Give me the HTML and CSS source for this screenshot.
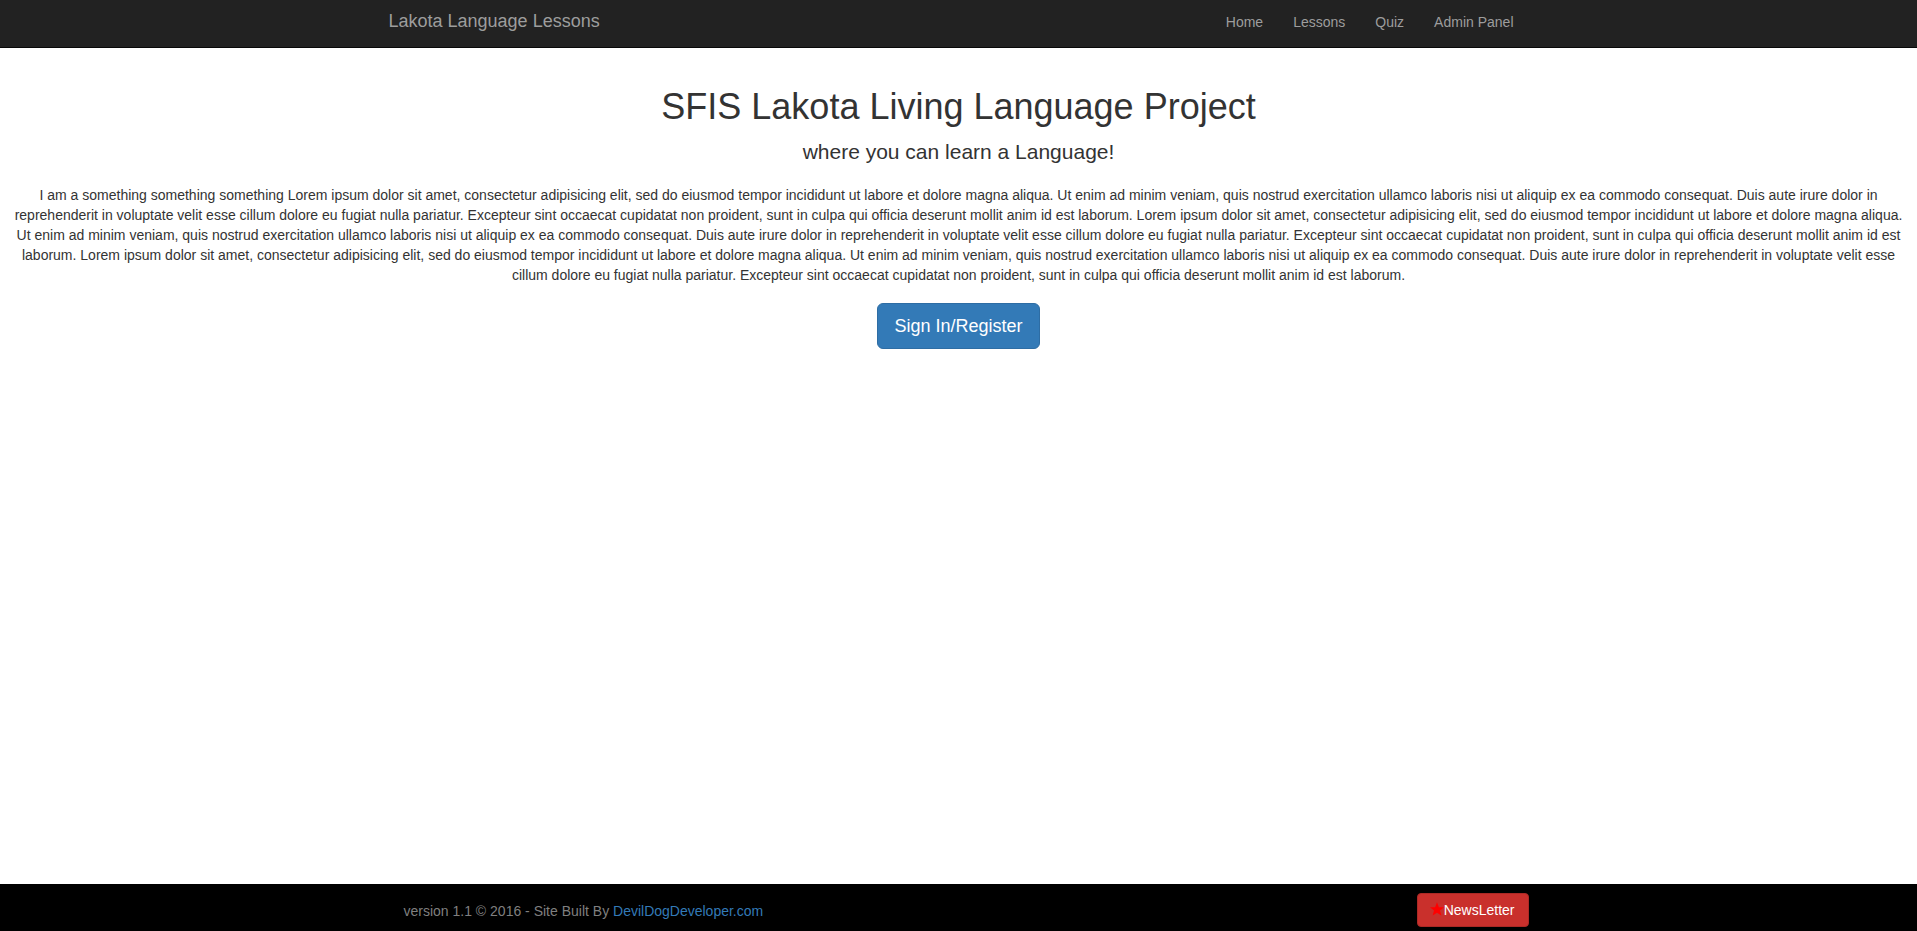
FILE: index.html
```html
<!DOCTYPE html>
<html lang="en">
<head>
<meta charset="utf-8">
<title>Lakota Language Lessons</title>
<link rel="stylesheet" href="styles.css">
</head>
<body>
<div class="page">
  <nav class="navbar">
    <div class="container nav-inner">
      <a class="brand" href="#">Lakota Language Lessons</a>
      <ul class="nav-links">
        <li><a href="#">Home</a></li>
        <li><a href="#">Lessons</a></li>
        <li><a href="#">Quiz</a></li>
        <li><a href="#">Admin Panel</a></li>
      </ul>
    </div>
  </nav>

  <main class="main">
    <h1 class="title">SFIS Lakota Living Language Project</h1>
    <p class="lead">where you can learn a Language!</p>
    <p class="intro">I am a something something something Lorem ipsum dolor sit amet, consectetur adipisicing elit, sed do eiusmod tempor incididunt ut labore et dolore magna aliqua. Ut enim ad minim veniam, quis nostrud exercitation ullamco laboris nisi ut aliquip ex ea commodo consequat. Duis aute irure dolor in reprehenderit in voluptate velit esse cillum dolore eu fugiat nulla pariatur. Excepteur sint occaecat cupidatat non proident, sunt in culpa qui officia deserunt mollit anim id est laborum. Lorem ipsum dolor sit amet, consectetur adipisicing elit, sed do eiusmod tempor incididunt ut labore et dolore magna aliqua. Ut enim ad minim veniam, quis nostrud exercitation ullamco laboris nisi ut aliquip ex ea commodo consequat. Duis aute irure dolor in reprehenderit in voluptate velit esse cillum dolore eu fugiat nulla pariatur. Excepteur sint occaecat cupidatat non proident, sunt in culpa qui officia deserunt mollit anim id est laborum. Lorem ipsum dolor sit amet, consectetur adipisicing elit, sed do eiusmod tempor incididunt ut labore et dolore magna aliqua. Ut enim ad minim veniam, quis nostrud exercitation ullamco laboris nisi ut aliquip ex ea commodo consequat. Duis aute irure dolor in reprehenderit in voluptate velit esse cillum dolore eu fugiat nulla pariatur. Excepteur sint occaecat cupidatat non proident, sunt in culpa qui officia deserunt mollit anim id est laborum.</p>
    <div class="actions">
      <a class="btn btn-primary btn-lg" href="#">Sign In/Register</a>
    </div>
  </main>

  <footer class="footer">
    <div class="container footer-inner">
      <p class="footer-text">version 1.1 &copy; 2016 - Site Built By <a href="#">DevilDogDeveloper.com</a></p>
      <a class="btn btn-danger" href="#"><svg class="star" viewBox="0 0 24 24" width="14" height="14" aria-hidden="true"><path d="M12 0.5l3.2 8.3 8.8 0.3-6.9 5.5 2.4 8.6L12 18.3 4.5 23.2l2.4-8.6L0 9.1l8.8-0.3z" fill="#ff0000"/></svg>NewsLetter</a>
    </div>
  </footer>
</div>
</body>
</html>
```

FILE: styles.css
```css
* {
  box-sizing: border-box;
}

html, body {
  margin: 0;
  padding: 0;
}

body {
  font-family: "Liberation Sans", Arial, Helvetica, sans-serif;
  font-size: 14px;
  line-height: 1.42857143;
  color: #333333;
  background: #ffffff;
}

a {
  text-decoration: none;
}

.page {
  min-height: 100vh;
  display: flex;
  flex-direction: column;
}

.container {
  width: 1170px;
  margin: 0 auto;
  padding: 0 15px;
}

/* Navbar */
.navbar {
  background: #222222;
  border-bottom: 1px solid #080808;
  height: 48px;
}

.nav-inner {
  display: flex;
  justify-content: space-between;
  align-items: flex-start;
  height: 47px;
}

.brand {
  display: block;
  margin-left: -15px;
  padding: 11px 15px 0;
  font-size: 18px;
  line-height: 20px;
  color: #9d9d9d;
}

.nav-links {
  display: flex;
  list-style: none;
  margin: 0;
  padding: 0;
}

.nav-links a {
  display: block;
  padding: 12px 15px 0;
  font-size: 14px;
  line-height: 20px;
  color: #9d9d9d;
}

/* Main */
.main {
  flex: 1;
  text-align: center;
}

.title {
  margin: 39px 0 10px;
  font-size: 36px;
  font-weight: 500;
  line-height: 1.1;
  color: #333333;
}

.lead {
  margin: 0 0 19px;
  font-size: 21px;
  font-weight: 300;
  line-height: 1.4;
}

.intro {
  margin: 0;
  padding: 0 7px;
}

.actions {
  margin-top: 18px;
}

/* Buttons */
.btn {
  display: inline-block;
  border: 1px solid transparent;
  white-space: nowrap;
  vertical-align: middle;
  text-align: center;
  padding: 6px 12px;
  font-size: 14px;
  line-height: 20px;
  border-radius: 4px;
  color: #ffffff;
}

.btn-lg {
  padding: 10px 16px;
  font-size: 18px;
  line-height: 24px;
  border-radius: 6px;
}

.btn-primary {
  background: #337ab7;
  border-color: #2e6da4;
}

.btn-danger {
  background: #c9302c;
  border-color: #ac2925;
  display: inline-flex;
  align-items: center;
  padding: 6px 13px 6px 12px;
}

.star {
  display: block;
  margin-top: -2px;
}

/* Footer */
.footer {
  background: #000000;
  height: 47px;
}

.footer-inner {
  display: flex;
  justify-content: space-between;
  align-items: flex-start;
  height: 47px;
}

.footer-text {
  margin: 0 0 0 15px;
  padding-top: 17px;
  line-height: 20px;
  color: #7f7f7f;
}

.footer-text a {
  color: #337ab7;
}

.footer .btn-danger {
  margin-top: 9px;
}
```
